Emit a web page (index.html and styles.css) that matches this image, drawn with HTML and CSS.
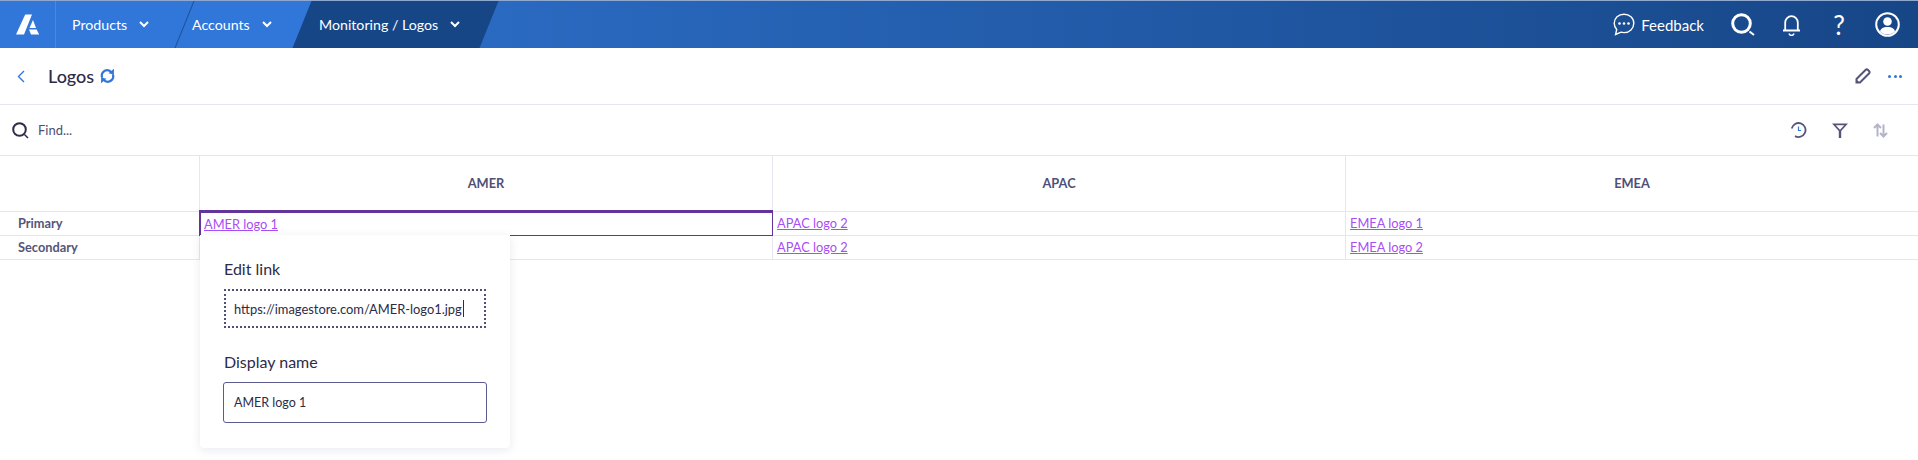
FILE: index.html
```html
<!doctype html>
<html>
<head>
<meta charset="utf-8">
<title>Logos</title>
<link rel="stylesheet" href="styles.css">
</head>
<body>

<div class="nav">
	<div class="logo">
		<svg width="24" height="21" viewBox="0 0 24 21"><path fill="#fff" d="M0 20.500 9.200 .5H16L8 20.500Z"/><path fill="#fff" d="M17 6 20 14H13.500ZM13 15.500H20.600L23.200 20.500H15Z"/></svg>
	</div>
	<div class="tab tab1"><span>Products</span><svg class="chev" width="10" height="7" viewBox="0 0 10 7"><path d="M1 1 5 5 9 1" fill="none" stroke="#fff" stroke-width="2"/></svg></div>
	<div class="tab tab2"><span>Accounts</span><svg class="chev" width="10" height="7" viewBox="0 0 10 7"><path d="M1 1 5 5 9 1" fill="none" stroke="#fff" stroke-width="2"/></svg></div>
	<div class="tab tab3"><span>Monitoring / Logos</span><svg class="chev" width="10" height="7" viewBox="0 0 10 7"><path d="M1 1 5 5 9 1" fill="none" stroke="#fff" stroke-width="2"/></svg></div>
	<div class="navRight">
		<svg class="fbIcon" width="22" height="23" viewBox="0 0 22 23"><path d="M11 1.200C5.500 1.200 1.200 5.200 1.200 10.300c0 2.400 1 4.500 2.500 6.100L2.600 21.500 8 19.200c1 .3 2 .4 3 .4 5.500 0 9.800-4.100 9.800-9.300S16.500 1.200 11 1.200Z" fill="none" stroke="#fff" stroke-width="1.400"/><circle cx="6.500" cy="10.500" r="1.300" fill="#fff"/><circle cx="11" cy="10.500" r="1.300" fill="#fff"/><circle cx="15.500" cy="10.500" r="1.300" fill="#fff"/></svg>
		<span class="fbText">Feedback</span>
		<svg class="searchIcon" width="25" height="23" viewBox="0 0 25 23"><circle cx="10.500" cy="10.500" r="8.800" fill="none" stroke="#fff" stroke-width="3"/><path d="M18.500 18.500 23 22" stroke="#fff" stroke-width="2"/></svg>
		<svg class="bellIcon" width="19" height="22" viewBox="0 0 19 22"><path d="M1 16.500h17M3.200 16.500V8.500a6.300 6.300 0 0 1 12.600 0v8" fill="none" stroke="#fff" stroke-width="1.800"/><path d="M7 19.500a2.600 2.600 0 0 0 5 0" fill="none" stroke="#fff" stroke-width="1.500"/></svg>
		<span class="help">?</span>
		<svg class="userIcon" width="25" height="25" viewBox="0 0 25 25"><circle cx="12.500" cy="12.500" r="11.300" fill="none" stroke="#fff" stroke-width="2"/><circle cx="12.500" cy="9.500" r="4.300" fill="#fff"/><path d="M5 19.500c.5-3 3.500-4 5.500-4.500h4c2 .5 5 1.500 5.500 4.500-2 2-4.500 3-7.500 3s-5.500-1-7.500-3Z" fill="#fff"/></svg>
	</div>
</div>

<div class="titleBar">
	<svg class="back" width="8" height="13" viewBox="0 0 8 13"><path d="M7 1 1.500 6.500 7 12" fill="none" stroke="#3176d9" stroke-width="1.400"/></svg>
	<h1>Logos</h1>
	<svg class="sync" width="15" height="16" viewBox="0 0 15 16"><path d="M11.500 4.300A5.400 5.400 0 0 0 2.800 4.500C1.600 6 1.500 8 2.300 9.800M3.500 11.700A5.400 5.400 0 0 0 12.200 11.500C13.400 10 13.500 8 12.700 6.200" fill="none" stroke="#3176d9" stroke-width="2.200"/><path d="M8.500 5.300 13.800 6.500 14 .8ZM6.500 10.700 1.200 9.500 1 15.200Z" fill="#3176d9"/></svg>
	<svg class="pencil" width="16" height="16" viewBox="0 0 16 16"><path d="M1.500 14.500V11L10.500 2a1.800 1.800 0 0 1 2.500 0l1 1a1.800 1.800 0 0 1 0 2.500L5 14.500Z" fill="none" stroke="#55557a" stroke-width="2"/><path d="M1 15V11L5 15Z" fill="#55557a"/></svg>
	<div class="dots"><i></i><i></i><i></i></div>
</div>

<div class="toolBar">
	<svg class="find" width="17" height="17" viewBox="0 0 17 17"><circle cx="7.500" cy="7.500" r="6.300" fill="none" stroke="#2c2c48" stroke-width="2"/><path d="M12.500 12.500 16 16" stroke="#2c2c48" stroke-width="1.500"/></svg>
	<span class="findText">Find...</span>
	<svg class="hist" width="17" height="16" viewBox="0 0 17 16"><path d="M1.700 6.500A7 7 0 1 1 5 14.100" fill="none" stroke="#55557a" stroke-width="1.800"/><path d="M8.500 4.500V8.500H11" fill="none" stroke="#3176d9" stroke-width="1.200"/></svg>
	<svg class="filter" width="16" height="15" viewBox="0 0 16 15"><path d="M0 .5H16L9.200 8V15H6.800V8ZM3.800 2.200 8 6.800 12.200 2.200Z" fill="#55557a" fill-rule="evenodd"/></svg>
	<svg class="sort" width="15" height="15" viewBox="0 0 15 15"><path d="M4.500 13.500V1.500M1 5 4.500 1.500 8 5M10.500 1.500V13.500M7 10 10.500 13.500 14 10" fill="none" stroke="#b4b4c8" stroke-width="2"/></svg>
</div>

<div class="grid">
	<div class="cell head first"></div>
	<div class="cell head">AMER</div>
	<div class="cell head">APAC</div>
	<div class="cell head">EMEA</div>

	<div class="cell label">Primary</div>
	<div class="cell selected">
		<a href="#">AMER logo 1</a>
		<div class="popover">
			<div class="popLabel">Edit link</div>
			<div class="linkInput">https://imagestore.com/AMER-logo1.jpg<i class="caret"></i></div>
			<div class="popLabel second">Display name</div>
			<div class="nameInput">AMER logo 1</div>
		</div>
	</div>
	<div class="cell"><a href="#">APAC logo 2</a></div>
	<div class="cell"><a href="#">EMEA logo 1</a></div>

	<div class="cell label">Secondary</div>
	<div class="cell"></div>
	<div class="cell"><a href="#">APAC logo 2</a></div>
	<div class="cell"><a href="#">EMEA logo 2</a></div>
</div>

</body>
</html>
```

FILE: styles.css
```css
* {
	box-sizing: border-box;
}
body {
	margin: 0;
	min-height: 460px;
	background-color: white;
	font-family: "Lato", "Open Sans", sans-serif;
	color: #2c2c48;
}
.nav {
	height: 48px;
	display: flex;
	align-items: center;
	color: white;
	border-top: 1px solid #8fa8d0;
	background: linear-gradient(90deg, #3176d9 0, #3176d9 400px, #2b6cc4 400px, #174687 100%);
	position: relative;
	overflow: hidden;
}
.logo {
	width: 56px;
	height: 47px;
	padding-left: 16px;
	display: flex;
	align-items: center;
	border-right: 1px solid #4a87e0;
}
.tab {
	height: 47px;
	display: flex;
	align-items: center;
	font-size: 14.200px;
	position: relative;
	z-index: 1;
}
.chev {
	margin-left: 12px;
}
.tab1 {
	width: 119px;
	padding-left: 16px;
}
.tab1::after {
	content: "";
	position: absolute;
	right: -10px;
	top: 0;
	bottom: 0;
	width: 1px;
	background-color: #1d4f96;
	transform: skewX(-22deg);
}
.tab2 {
	width: 145px;
	padding-left: 17px;
}
.tab3 {
	padding-left: 0;
	margin-left: -1px;
}
.tab3::before {
	content: "";
	position: absolute;
	left: -17px;
	right: -29px;
	top: 0;
	bottom: 0;
	background-color: #174687;
	transform: skewX(-22deg);
	z-index: -1;
}
.navRight {
	margin-left: auto;
	height: 47px;
	display: flex;
	align-items: center;
	padding-right: 18px;
}
.fbText {
	font-size: 15px;
	margin-left: 6px;
}
.searchIcon {
	margin-left: 27px;
}
.bellIcon {
	margin-left: 26px;
}
.help {
	font-size: 26px;
	width: 16px;
	margin-left: 30px;
	text-align: center;
}
.userIcon {
	margin-left: 28px;
}
.titleBar {
	height: 57px;
	display: flex;
	align-items: center;
	padding: 0 16px 0 17px;
	border-bottom: 1px solid #e6e6f3;
}
h1 {
	font-size: 18px;
	font-weight: 500;
	margin: 0 0 0 23px;
}
.sync {
	margin-left: 6px;
}
.pencil {
	margin-left: auto;
}
.dots {
	display: flex;
	gap: 2.500px;
	margin-left: 17px;
}
.dots i {
	width: 3px;
	height: 3px;
	border-radius: 50%;
	background-color: #3176d9;
}
.toolBar {
	height: 50px;
	display: flex;
	align-items: center;
	padding: 0 30px 0 12px;
}
.findText {
	font-size: 13px;
	margin-left: 9px;
	color: #4f4f70;
}
.hist {
	margin-left: auto;
}
.filter {
	margin-left: 25px;
}
.sort {
	margin-left: 25px;
}
.grid {
	display: grid;
	grid-template-columns: 200px 573px 573px 1fr;
	grid-template-rows: 56px 24px 24px;
	border-top: 1px solid #e6e6f3;
}
.cell {
	font-size: 12.800px;
	padding: 0 4px 2px;
	display: flex;
	align-items: center;
	border-bottom: 1px solid #e6e6f3;
	border-right: 1px solid #e6e6f3;
	position: relative;
}
.cell:nth-child(4n) {
	border-right: none;
}
.cell a {
	color: #a94ef5;
}
.head {
	justify-content: center;
	font-weight: 700;
	color: #4f4f78;
}
.label {
	font-weight: 700;
	color: #55557a;
	padding-left: 18px;
}
.selected {
	margin: -2px 0 0 -1px;
	padding-left: 3px;
	padding-bottom: 1px;
	border-top: 3px solid #63359a;
	border-left: 2px solid #63359a;
	border-right: 1px solid #63359a;
	border-bottom: 1px solid #63359a;
	z-index: 2;
}
.popover {
	position: absolute;
	top: 100%;
	left: -1px;
	width: 310px;
	height: 213px;
	padding: 24px 24px 0;
	background-color: white;
	border-radius: 0 0 4px 4px;
	box-shadow: 0 2px 10px rgba(80, 80, 140, .12);
}
.popLabel {
	font-size: 16px;
	line-height: 20px;
	color: #2c2c48;
}
.popLabel.second {
	margin-top: 24px;
}
.linkInput {
	margin-top: 10px;
	width: 262px;
	height: 39px;
	display: flex;
	align-items: center;
	padding-left: 8px;
	font-size: 12.900px;
	border: 2px dotted #4f4f78;
}
.caret {
	display: inline-block;
	width: 1px;
	height: 17px;
	background-color: #2c2c48;
	margin-left: 1px;
}
.nameInput {
	margin: 10px 0 0 -1px;
	width: 264px;
	height: 41px;
	display: flex;
	align-items: center;
	padding-left: 10px;
	font-size: 12.500px;
	border: 1px solid #5b5b90;
	border-radius: 3px;
}
```
